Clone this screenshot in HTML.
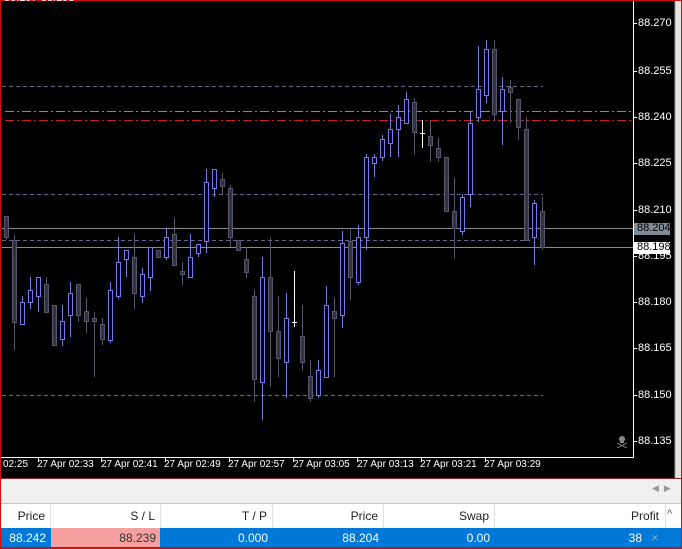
<!DOCTYPE html>
<html><head><meta charset="utf-8"><style>
*{margin:0;padding:0;box-sizing:border-box}
body{width:682px;height:549px;overflow:hidden;background:#000;font-family:"Liberation Sans",sans-serif;position:relative}
.t{position:absolute;font-size:11px;white-space:nowrap}
</style></head><body>
<svg width="682" height="549" style="position:absolute;left:0;top:0" shape-rendering="crispEdges">
<rect x="0" y="0" width="682" height="479" fill="#000"/>
<rect x="675" y="0" width="6" height="479" fill="#e4e4e4"/>
<line x1="675" y1="0" x2="675" y2="479" stroke="#a0a0a0"/>
<line x1="2" y1="86.5" x2="543" y2="86.5" stroke="#66668f" stroke-dasharray="4,3"/>
<line x1="5" y1="111.5" x2="633" y2="111.5" stroke="#48b848" stroke-dasharray="9,3,2,3"/>
<line x1="5" y1="120.5" x2="633" y2="120.5" stroke="#c82020" stroke-dasharray="9,3,2,3"/>
<line x1="2" y1="194.5" x2="543" y2="194.5" stroke="#66668f" stroke-dasharray="4,3"/>
<line x1="2" y1="228.5" x2="633" y2="228.5" stroke="#8c8c8c"/>
<line x1="2" y1="240.5" x2="530" y2="240.5" stroke="#66668f" stroke-dasharray="4,3"/>
<line x1="2" y1="247.5" x2="633" y2="247.5" stroke="#8c8c8c"/>
<line x1="2" y1="395.5" x2="543" y2="395.5" stroke="#66668f" stroke-dasharray="4,3"/>
<g id="c"></g>
<line x1="633.5" y1="0" x2="633.5" y2="458" stroke="#fff"/>
<line x1="0" y1="457.5" x2="634" y2="457.5" stroke="#fff"/>
<g stroke="#fff">
<line x1="633" y1="23.5" x2="637" y2="23.5"/><line x1="633" y1="71.5" x2="637" y2="71.5"/>
<line x1="633" y1="117.5" x2="637" y2="117.5"/><line x1="633" y1="163.5" x2="637" y2="163.5"/>
<line x1="633" y1="210.5" x2="637" y2="210.5"/><line x1="633" y1="256.5" x2="637" y2="256.5"/>
<line x1="633" y1="302.5" x2="637" y2="302.5"/><line x1="633" y1="348.5" x2="637" y2="348.5"/>
<line x1="633" y1="395.5" x2="637" y2="395.5"/><line x1="633" y1="441.5" x2="637" y2="441.5"/>
<line x1="38.5" y1="457" x2="38.5" y2="462"/><line x1="101.5" y1="457" x2="101.5" y2="462"/>
<line x1="165.5" y1="457" x2="165.5" y2="462"/><line x1="229.5" y1="457" x2="229.5" y2="462"/>
<line x1="293.5" y1="457" x2="293.5" y2="462"/><line x1="357.5" y1="457" x2="357.5" y2="462"/>
<line x1="421.5" y1="457" x2="421.5" y2="462"/><line x1="485.5" y1="457" x2="485.5" y2="462"/>
</g>
<rect x="634" y="223" width="36" height="12" fill="#7f8c96"/>
<rect x="634" y="242" width="36" height="12" fill="#fff"/>
<g fill="#888"><circle cx="622" cy="439" r="3"/><rect x="620" y="441" width="4" height="2"/>
<line x1="617" y1="443" x2="627" y2="448" stroke="#888"/><line x1="627" y1="443" x2="617" y2="448" stroke="#888"/></g>
<rect x="0" y="479" width="682" height="70" fill="#f0f0f0"/>
<line x1="0" y1="478.5" x2="682" y2="478.5" stroke="#8a2020"/>
<line x1="0" y1="503.5" x2="682" y2="503.5" stroke="#c8c8c8"/>
<rect x="0" y="504" width="682" height="24" fill="#fff"/>
<g stroke="#e0e0e0"><line x1="50.5" y1="504" x2="50.5" y2="528"/><line x1="160.5" y1="504" x2="160.5" y2="528"/><line x1="272.5" y1="504" x2="272.5" y2="528"/><line x1="383.5" y1="504" x2="383.5" y2="528"/><line x1="494.5" y1="504" x2="494.5" y2="528"/><line x1="665.5" y1="504" x2="665.5" y2="528"/></g>
<rect x="0" y="528" width="682" height="19" fill="#0078d7"/>
<rect x="51" y="528" width="109" height="19" fill="#f7a0a0"/>
<rect x="0" y="547" width="682" height="2" fill="#d01010"/>
<rect x="0" y="0" width="682" height="1" fill="#d01010"/>
<rect x="0" y="0" width="1" height="549" fill="#d01010"/>
<rect x="681" y="0" width="1" height="549" fill="#d01010"/>
</svg>
<div class="t" style="left:4px;top:-8px;color:#fff">88.197 88.198</div>
<div class="t" style="left:638px;top:17px;color:#fff">88.270</div>
<div class="t" style="left:638px;top:65px;color:#fff">88.255</div>
<div class="t" style="left:638px;top:111px;color:#fff">88.240</div>
<div class="t" style="left:638px;top:157px;color:#fff">88.225</div>
<div class="t" style="left:638px;top:204px;color:#fff">88.210</div>
<div class="t" style="left:638px;top:250px;color:#fff">88.195</div>
<div class="t" style="left:638px;top:296px;color:#fff">88.180</div>
<div class="t" style="left:638px;top:342px;color:#fff">88.165</div>
<div class="t" style="left:638px;top:389px;color:#fff">88.150</div>
<div class="t" style="left:638px;top:435px;color:#fff">88.135</div>
<div class="t" style="left:637px;top:222px;color:#000">88.204</div>
<div class="t" style="left:637px;top:241px;color:#000">88.198</div>
<div class="t" style="left:3px;top:459px;color:#fff;font-size:10px">02:25</div>
<div class="t" style="left:37px;top:459px;color:#fff;font-size:10px">27 Apr 02:33</div>
<div class="t" style="left:101px;top:459px;color:#fff;font-size:10px">27 Apr 02:41</div>
<div class="t" style="left:164px;top:459px;color:#fff;font-size:10px">27 Apr 02:49</div>
<div class="t" style="left:228px;top:459px;color:#fff;font-size:10px">27 Apr 02:57</div>
<div class="t" style="left:293px;top:459px;color:#fff;font-size:10px">27 Apr 03:05</div>
<div class="t" style="left:357px;top:459px;color:#fff;font-size:10px">27 Apr 03:13</div>
<div class="t" style="left:420px;top:459px;color:#fff;font-size:10px">27 Apr 03:21</div>
<div class="t" style="left:484px;top:459px;color:#fff;font-size:10px">27 Apr 03:29</div>
<div class="t" style="left:652px;top:483px;color:#999;font-size:9px">&#9664;&nbsp;&nbsp;&#9654;</div>
<div class="t" style="left:0;width:45px;text-align:right;top:509px;color:#222;font-size:12px">Price</div>
<div class="t" style="left:60px;width:95px;text-align:right;top:509px;color:#222;font-size:12px">S / L</div>
<div class="t" style="left:170px;width:97px;text-align:right;top:509px;color:#222;font-size:12px">T / P</div>
<div class="t" style="left:280px;width:98px;text-align:right;top:509px;color:#222;font-size:12px">Price</div>
<div class="t" style="left:390px;width:99px;text-align:right;top:509px;color:#222;font-size:12px">Swap</div>
<div class="t" style="left:500px;width:159px;text-align:right;top:509px;color:#222;font-size:12px">Profit</div>
<div class="t" style="left:667px;top:508px;color:#555;font-size:11px">^</div>
<div class="t" style="left:0;width:46px;text-align:right;top:531px;color:#fff;font-size:12px">88.242</div>
<div class="t" style="left:60px;width:96px;text-align:right;top:531px;color:#333;font-size:12px">88.239</div>
<div class="t" style="left:170px;width:98px;text-align:right;top:531px;color:#fff;font-size:12px">0.000</div>
<div class="t" style="left:280px;width:99px;text-align:right;top:531px;color:#fff;font-size:12px">88.204</div>
<div class="t" style="left:390px;width:100px;text-align:right;top:531px;color:#fff;font-size:12px">0.00</div>
<div class="t" style="left:500px;width:142px;text-align:right;top:531px;color:#fff;font-size:12px">38</div>
<div class="t" style="left:651px;top:530px;color:#9ab;font-size:13px">&#215;</div>
<script>
var C=[
[6,216,216,237,240,'d'],[14,235,240,322,350,'d'],[22,296,302,324,324,'u'],[30,277,290,302,309,'u'],
[38,277,277,296,312,'u'],[46,277,284,312,312,'d'],[54,305,305,345,345,'d'],[62,305,321,339,346,'u'],
[70,282,293,315,337,'u'],[78,284,284,315,322,'d'],[86,298,311,321,333,'d'],[94,312,318,321,377,'d'],
[102,318,324,339,345,'d'],[110,282,290,340,343,'u'],[118,237,262,296,299,'u'],[126,250,250,259,277,'u'],
[134,234,257,293,309,'d'],[142,268,274,296,303,'u'],[150,247,247,277,291,'u'],[158,250,250,257,257,'d'],
[166,228,237,257,260,'u'],[174,218,234,265,265,'d'],[182,262,271,274,285,'d'],[190,234,257,277,277,'u'],
[198,244,244,253,257,'u'],[206,169,182,241,253,'u'],[214,169,169,188,197,'u'],[222,173,179,186,194,'d'],
[230,185,188,237,247,'d'],[238,240,240,250,250,'d'],[246,247,259,272,278,'d'],[254,290,296,379,402,'d'],
[262,257,277,382,420,'u'],[270,237,277,331,387,'d'],[278,296,331,358,377,'d'],[286,293,318,362,398,'u'],
[294,271,322,322,327,'w'],[302,305,336,362,371,'d'],[310,360,376,398,402,'d'],[318,360,370,395,398,'u'],
[326,286,305,377,377,'u'],[334,298,311,318,377,'d'],[342,231,243,315,328,'u'],[350,229,241,277,300,'d'],
[358,225,237,282,285,'u'],[366,154,157,237,250,'u'],[374,154,157,163,177,'u'],[382,135,139,157,161,'u'],
[390,114,129,143,157,'u'],[398,105,117,129,157,'u'],[406,92,99,123,123,'u'],[414,98,102,132,155,'d'],
[422,120,133,133,148,'w'],[430,120,136,145,162,'d'],[438,138,148,157,162,'d'],[446,157,157,211,211,'d'],
[454,178,211,228,259,'d'],[462,194,197,231,235,'u'],[470,111,123,194,207,'u'],[478,46,89,117,122,'u'],
[486,40,49,95,103,'u'],[494,40,49,114,120,'d'],[502,77,89,111,145,'u'],[510,80,87,92,123,'d'],
[518,99,99,127,140,'d'],[526,117,129,240,240,'d'],[534,200,203,237,265,'u'],[542,197,211,247,250,'d']];
var s='';
C.forEach(function(c){var x=c[0],t=c[5];
 if(t=='w'){s+='<line x1="'+(x+.5)+'" y1="'+c[1]+'" x2="'+(x+.5)+'" y2="'+c[4]+'" stroke="#fff"/><line x1="'+(x-2)+'" y1="'+(c[2]+.5)+'" x2="'+(x+3)+'" y2="'+(c[2]+.5)+'" stroke="#fff"/>';return;}
 var st=t=='u'?'#7878e8':'#55556c',f=t=='u'?'#000':'#33333f';
 s+='<line x1="'+(x+.5)+'" y1="'+c[1]+'" x2="'+(x+.5)+'" y2="'+c[4]+'" stroke="'+st+'"/>';
 s+='<rect x="'+(x-1.5)+'" y="'+(c[2]+.5)+'" width="4" height="'+Math.max(1,c[3]-c[2])+'" fill="'+f+'" stroke="'+st+'"/>';
});
document.getElementById('c').innerHTML=s;
</script>
</body></html>
